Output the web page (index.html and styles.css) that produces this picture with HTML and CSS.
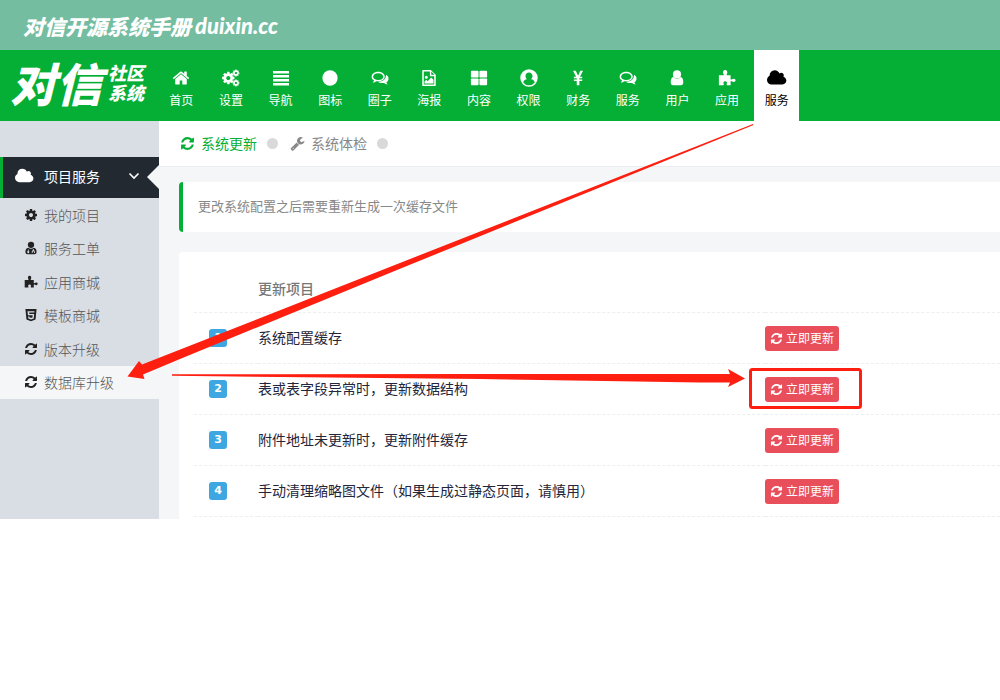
FILE: index.html
```html
<!DOCTYPE html>
<html lang="zh-CN">
<head>
<meta charset="utf-8">
<title>对信开源系统手册</title>
<link rel="stylesheet" href="styles.css">
</head>
<body>
<svg class="sprite" aria-hidden="true">
  <symbol id="refresh" viewBox="0 0 1792 1792"><path d="M1639 1056q0 5-1 7-64 268-268 434.5t-478 166.5q-146 0-282.5-55t-243.5-157l-129 129q-19 19-45 19t-45-19-19-45v-448q0-26 19-45t45-19h448q26 0 45 19t19 45-19 45l-137 137q71 66 161 102t187 36q134 0 250-65t186-179q11-17 53-117 8-23 30-23h192q13 0 22.5 9.5t9.5 22.5zm25-800v448q0 26-19 45t-45 19h-448q-26 0-45-19t-19-45 19-45l138-138q-148-137-349-137-134 0-250 65t-186 179q-11 17-53 117-8 23-30 23h-199q-13 0-22.5-9.5t-9.5-22.5v-7q65-268 270-434.5t480-166.5q146 0 284 55.5t245 156.5l130-129q19-19 45-19t45 19 19 45z"/></symbol>
  <symbol id="home" viewBox="0 0 1792 1792"><path d="M1472 992v480q0 26-19 45t-45 19h-384v-384h-256v384h-384q-26 0-45-19t-19-45v-480q0-1 .5-3t.5-3l575-474 575 474q1 2 1 6zm223-69l-62 74q-8 9-21 11h-3q-13 0-21-7l-692-577-692 577q-12 8-24 7-13-2-21-11l-62-74q-8-10-7-23.5t11-21.5l719-599q32-26 76-26t76 26l244 204v-195q0-14 9-23t23-9h192q14 0 23 9t9 23v408l219 182q10 8 11 21.5t-7 23.5z"/></symbol>
  <symbol id="cog" viewBox="0 0 1792 1792"><path d="M1152 896q0-106-75-181t-181-75-181 75-75 181 75 181 181 75 181-75 75-181zm512-109v222q0 12-8 23t-20 13l-185 28q-19 54-39 91 35 50 107 138 10 12 10 25t-9 23q-27 37-99 108t-94 71q-12 0-26-9l-138-108q-44 23-91 38-16 136-29 186-7 28-36 28h-222q-14 0-24.5-8.5t-11.5-21.5l-28-184q-49-16-90-37l-141 107q-10 9-25 9-14 0-25-11-126-114-165-168-7-10-7-23 0-12 8-23 15-21 51-66.5t54-70.5q-27-50-41-99l-183-27q-13-2-21-12.5t-8-23.5v-222q0-12 8-23t19-13l186-28q14-46 39-92-40-57-107-138-10-12-10-24 0-10 9-23 26-36 98.5-107.5t94.5-71.5q13 0 26 10l138 107q44-23 91-38 16-136 29-186 7-28 36-28h222q14 0 24.5 8.5t11.5 21.5l28 184q49 16 90 37l142-107q9-9 24-9 13 0 25 10 129 119 165 170 7 8 7 22 0 12-8 23-15 21-51 66.5t-54 70.5q26 50 41 98l183 28q13 2 21 12.5t8 23.5z"/></symbol>
  <symbol id="cogs" viewBox="0 0 20 20"><use href="#cog" x="-1" y="2" width="16" height="16"/><use href="#cog" x="11" y="0" width="9" height="9"/><use href="#cog" x="11" y="11" width="9" height="9"/></symbol>
  <symbol id="bars" viewBox="0 0 18 18"><path d="M1 2h16v2.500H1zM1 6h16v2.500H1zM1 10h16v2.500H1zM1 14h16v2.500H1z"/></symbol>
  <symbol id="circle" viewBox="0 0 20 20"><circle cx="10" cy="10" r="8.5"/></symbol>
  <symbol id="comments" viewBox="0 0 20 20"><path fill-rule="evenodd" d="M8 3C3.800 3 .7 5.400.7 8.500c0 1.800 1 3.300 2.700 4.300-.2.900-.8 1.600-1.500 2.300 1.600-.1 3-.8 4-1.600.7.100 1.400.2 2.100.2 4.200 0 7.300-2.300 7.300-5.300S12.200 3 8 3zm0 1.600c3.300 0 5.700 1.700 5.700 3.900S11.300 12.200 8 12.200 2.300 10.600 2.300 8.500 4.700 4.600 8 4.600z"/><path d="M16.600 6.500c1.700.9 2.900 2.400 2.900 4.200 0 1.700-1 3.100-2.500 4.100.2.900.8 1.600 1.500 2.300-1.600-.1-3-.8-4-1.600-2.600.5-5.200 0-7-1.300 5 .2 9.600-2.400 9.100-7.700z"/></symbol>
  <symbol id="picture" viewBox="0 0 20 20"><path fill-rule="evenodd" d="M3.500 1H12l5.500 5.500V18q0 1-1 1h-13q-1 0-1-1V2q0-1 1-1zm.7 1.700v14.600h11.600V8H11V2.700zm8.300.2v3.600h3.600zM7 7.500a1.700 1.700 0 1 1 0 3.400 1.700 1.700 0 0 1 0-3.400zM5 16v-2l2-2 1.500 1.500L12.500 9.500 15 12v4z"/></symbol>
  <symbol id="grid" viewBox="0 0 20 20"><rect x="1" y="2" width="8.500" height="7.500" rx="1"/><rect x="10.500" y="2" width="8.500" height="7.500" rx="1"/><rect x="1" y="10.500" width="8.500" height="7.500" rx="1"/><rect x="10.500" y="10.500" width="8.500" height="7.500" rx="1"/></symbol>
  <symbol id="person" viewBox="0 0 20 20"><path fill-rule="evenodd" d="M10 .3a9.700 9.700 0 1 1 0 19.400A9.700 9.700 0 0 1 10 .3zm0 3.700c-2.300 0-3.900 1.700-3.900 3.900 0 1.500.6 2.800 1.600 3.500-2.300.2-3.600 1.400-4.100 3.500a8 8 0 0 0 12.800 0c-.5-2.100-1.800-3.300-4.100-3.500 1-.7 1.600-2 1.600-3.500C13.900 5.700 12.300 4 10 4z"/></symbol>
  <symbol id="yen" viewBox="0 0 20 20"><path d="M4.500 2h3l2.600 5.500L12.600 2h3l-3.400 6.600h2.500v1.700h-3.200v1.400h3.200v1.700h-3.200V18H8.600v-4.600H5.400v-1.700h3.200v-1.400H5.400V8.600h2.500z"/></symbol>
  <symbol id="user" viewBox="0 0 20 20"><circle cx="10" cy="6" r="4.500"/><path d="M6 9c-2.200.3-3 3-3 5.800C3 17 4 18 5.600 18h8.800c1.600 0 2.600-1 2.600-3.200 0-2.800-.8-5.500-3-5.800-2 2.500-6 2.500-8 0z"/></symbol>
  <symbol id="puzzle" viewBox="0 0 20 20"><path d="M1 7h4.800q1.200-.2.500-1.200C4.800 3.500 5.900 1 8 1s3.200 2.500 1.700 4.800q-.7 1 .5 1.200H14v4.300q.2.900 1.300.2c2-1.400 4.200-.8 4.200 1.100s-2.200 2.500-4.200 1.100q-1.100-.7-1.300.3V18h-4q-.8-.3-.3-1.300c.7-1.900 0-3-1.700-3s-2.400 1.100-1.700 3q.5 1-.3 1.300H1z"/></symbol>
  <symbol id="cloud" viewBox="64 128 1984 1536"><path d="M1984 1152q0 159-112.500 271.500t-271.500 112.500h-1088q-185 0-316.500-131.500t-131.500-316.500q0-132 71-241.500t187-163.500q-2-28-2-43 0-212 150-362t362-150q158 0 286.500 88t187.500 230q70-62 166-62 106 0 181 75t75 181q0 75-41 138 129 30 213 134.500t84 239.500z"/></symbol>
  <symbol id="wrench" viewBox="0 0 1792 1792"><path d="M448 1472q0-26-19-45t-45-19-45 19-19 45 19 45 45 19 45-19 19-45zm644-420l-682 682q-37 37-90 37-52 0-91-37l-106-108q-38-36-38-90 0-53 38-91l681-681q39 98 114.500 173.500t173.500 114.500zm634-435q0 39-23 106-47 134-164.500 217.500t-258.500 83.500q-185 0-316.500-131.500t-131.500-316.500 131.500-316.500 316.500-131.500q58 0 121.500 16.500t107.500 46.500q16 11 16 28t-16 28l-293 169v224l193 107q5-3 79-48.500t135.500-81 70.500-35.500q15 0 23.500 10t8.500 25z"/></symbol>
  <symbol id="doctor" viewBox="0 0 20 20"><circle cx="10" cy="5.500" r="4.500"/><path fill-rule="evenodd" d="M6 9.500C3 10 2 12.500 2 15.500 2 18 3.200 19 5 19h10c1.800 0 3-1 3-3.500 0-3-1-5.500-4-6-2.200 2-5.800 2-8 0zM5.500 12h1.200v2.400a1.500 1.500 0 1 1-1.200 0zM12.700 11.500h1.200v1.800q1.600.5 1.600 2.200v1.800h-1.200v-1.800q0-1-1-1t-1 1v1.800h-1.200v-1.800q0-1.700 1.600-2.200z"/></symbol>
  <symbol id="shield" viewBox="0 0 20 20"><path fill-rule="evenodd" d="M2 1.500h16l-1.500 15L10 18.800l-6.500-2.300zm3 3 .7 6h6.700l-.3 2.900-2.100.7-2.100-.7-.2-1.400H5.900l.3 3 3.800 1.400 3.900-1.400.6-6.500H7.600L7.400 6.500h7.300l.2-2z"/></symbol>
  <symbol id="chevron" viewBox="0 0 12 12"><path d="M1.500 3.500 6 8l4.500-4.500" fill="none" stroke="currentColor" stroke-width="1.600"/></symbol>
</svg>
<div class="page">
  <div class="banner"><span class="banner-name">对信开源系统手册</span><span class="banner-site">duixin.cc</span></div>
  <header class="header">
    <a class="logo" href="#"><span class="logo-main">对信</span><span class="logo-sub">社区<br>系统</span></a>
    <nav class="nav">
      <a href="#"><svg><use href="#home"/></svg>首页</a>
      <a href="#"><svg class="wide"><use href="#cogs"/></svg>设置</a>
      <a href="#"><svg><use href="#bars"/></svg>导航</a>
      <a href="#"><svg><use href="#circle"/></svg>图标</a>
      <a href="#"><svg><use href="#comments"/></svg>圈子</a>
      <a href="#"><svg><use href="#picture"/></svg>海报</a>
      <a href="#"><svg><use href="#grid"/></svg>内容</a>
      <a href="#"><svg><use href="#person"/></svg>权限</a>
      <a href="#"><svg><use href="#yen"/></svg>财务</a>
      <a href="#"><svg><use href="#comments"/></svg>服务</a>
      <a href="#"><svg><use href="#user"/></svg>用户</a>
      <a href="#"><svg><use href="#puzzle"/></svg>应用</a>
      <a class="current" href="#"><svg class="wide"><use href="#cloud"/></svg>服务</a>
    </nav>
  </header>
  <div class="body">
    <aside class="sidebar">
      <button class="group" type="button"><svg class="group-icon"><use href="#cloud"/></svg><span>项目服务</span><svg class="group-chevron"><use href="#chevron"/></svg></button>
      <div class="menu">
        <a href="#"><svg><use href="#cog"/></svg>我的项目</a>
        <a href="#"><svg><use href="#doctor"/></svg>服务工单</a>
        <a href="#"><svg><use href="#puzzle"/></svg>应用商城</a>
        <a href="#"><svg><use href="#shield"/></svg>模板商城</a>
        <a href="#"><svg><use href="#refresh"/></svg>版本升级</a>
        <a class="current" href="#"><svg><use href="#refresh"/></svg>数据库升级</a>
      </div>
    </aside>
    <main class="main">
      <div class="tabs">
        <a class="current" href="#"><svg><use href="#refresh"/></svg>系统更新<i class="dot"></i></a>
        <a href="#"><svg><use href="#wrench"/></svg>系统体检<i class="dot"></i></a>
      </div>
      <div class="content">
        <p class="tip">更改系统配置之后需要重新生成一次缓存文件</p>
        <div class="card">
          <table class="table">
            <thead><tr><th class="col-num"></th><th>更新项目</th><th class="col-action"></th></tr></thead>
            <tbody>
              <tr><td><span class="badge">1</span></td><td>系统配置缓存</td><td><button class="update" type="button"><svg><use href="#refresh"/></svg>立即更新</button></td></tr>
              <tr><td><span class="badge">2</span></td><td>表或表字段异常时，更新数据结构</td><td><button class="update" type="button"><svg><use href="#refresh"/></svg>立即更新</button></td></tr>
              <tr><td><span class="badge">3</span></td><td>附件地址未更新时，更新附件缓存</td><td><button class="update" type="button"><svg><use href="#refresh"/></svg>立即更新</button></td></tr>
              <tr><td><span class="badge">4</span></td><td>手动清理缩略图文件（如果生成过静态页面，请慎用）</td><td><button class="update" type="button"><svg><use href="#refresh"/></svg>立即更新</button></td></tr>
            </tbody>
          </table>
        </div>
      </div>
    </main>
  </div>
  <svg class="marks" viewBox="0 0 1000 519" aria-hidden="true">
    <path d="M753 124 142 364.500 139 361 127.500 376.500 144.500 379 143 374.500 180 359 397 270 753.500 125z"/>
    <path d="M172 374.300 480 374 730 374 728 369 745 378.500 728 387 730 382.500 700 382.500 480 379 172 375.800z"/>
    <rect x="750.500" y="369.500" width="110" height="38" rx="2"/>
  </svg>
</div>
</body>
</html>
```
FILE: styles.css
```css
* { box-sizing: border-box; }
body { margin: 0; background: #fff; color: #23263a; font: 14px/20px "Noto Sans CJK SC", sans-serif; }
a { color: inherit; text-decoration: none; }
button { border: 0; font: inherit; cursor: pointer; }
svg { fill: currentColor; flex: none; }
.sprite { position: absolute; width: 0; height: 0; }
.page { position: relative; }

.banner { display: flex; align-items: center; gap: 4px; height: 50px; padding: 2px 23px 0; background: #74bda1; color: #fff; font-style: italic; font-weight: 900; }
.banner-name { font-size: 21px; }
.banner-site { font-family: Lato, sans-serif; font-size: 22px; }

.header { display: flex; height: 71px; background: #05ae35; color: #fff; }
.logo { display: flex; align-items: center; gap: 6px; flex: none; width: 157px; padding: 0 0 8px 10px; font-style: italic; font-weight: 900; }
.logo-main { font-size: 46px; line-height: 56px; }
.logo-sub { font-size: 18px; line-height: 20px; }
.nav { display: grid; grid-template-columns: repeat(13, 1fr); flex: 0 1 645px; font-size: 12px; }
.nav a { display: flex; flex-direction: column; align-items: center; gap: 3px; margin: 0 3px 0 2px; padding-top: 19px; }
.nav svg { width: 18px; height: 18px; }
.nav .wide { width: 20px; }
.nav .current { background: #fff; color: #000; }

.body { display: flex; min-height: 398px; }
.sidebar { flex: none; width: 159px; padding-top: 36px; background: #d9dde4; }
.group { position: relative; display: flex; align-items: center; gap: 10px; width: 100%; height: 41px; padding: 0 0 4px 12px; border-left: 3px solid #05ae35; background: #222931; color: #fff; text-align: left; }
.group-icon { width: 19px; height: 16px; }
.group-chevron { width: 12px; height: 12px; margin-left: 18px; }
.group::after { content: ""; position: absolute; right: 0; top: 8px; width: 12px; height: 24px; background: #f4f6f8; clip-path: polygon(100% 0, 0 50%, 100% 100%); }
.menu { display: grid; grid-auto-rows: 1fr; min-height: 201px; color: #555; font-weight: 300; }
.menu a { display: flex; align-items: center; gap: 6px; padding-left: 24px; }
.menu svg { width: 14px; height: 14px; color: #222; }
.menu .current { background: #f4f6f8; }

.main { flex: 1; min-width: 0; background: #f4f6f8; }
.tabs { display: flex; gap: 12px; height: 46px; padding: 0 0 1px 21px; border-bottom: 1px solid #ebedf0; background: #fff; color: #888; }
.tabs a { display: flex; align-items: center; gap: 6px; }
.tabs svg { width: 15px; height: 15px; }
.tabs .current { color: #05ae35; }
.dot { width: 11px; height: 11px; margin-left: 4px; border-radius: 50%; background: #d9d9d9; }
.content { padding: 15px 0 0 20px; }
.tip { margin: 0 0 20px; padding: 14px 15px 16px; border-left: 4px solid #05ae35; border-radius: 4px 0 0 4px; background: #fff; color: #888; font-size: 13px; }
.card { padding: 12px 0 2px 15px; border-radius: 4px 0 0 0; background: #fff; }
.table { width: 100%; border-collapse: separate; border-spacing: 0; table-layout: fixed; }
.table th, .table td { height: 51px; padding: 0; border-bottom: 1px dashed #eceef0; text-align: left; vertical-align: middle; }
.table td:nth-child(2) { padding-bottom: 2px; }
.table th { height: 49px; color: #777; font-weight: 500; }
.col-num { width: 64px; }
.col-action { width: 235px; }
.badge { display: block; width: 18px; height: 18px; margin-left: 15px; border-radius: 3px; background: #3ea7e1; color: #fff; font: 800 11px/18px "DejaVu Sans", sans-serif; text-align: center; }
.update { display: flex; align-items: center; justify-content: center; gap: 3px; width: 74px; height: 25px; padding: 0; border-radius: 3px; background: #e84f5b; color: #fff; font-size: 12px; }
.update svg { width: 13px; height: 13px; }

.marks { position: absolute; left: 0; top: 0; width: 1000px; height: 519px; fill: #fe1f10; pointer-events: none; }
.marks rect { fill: none; stroke: #fe1f10; stroke-width: 3; }
```
